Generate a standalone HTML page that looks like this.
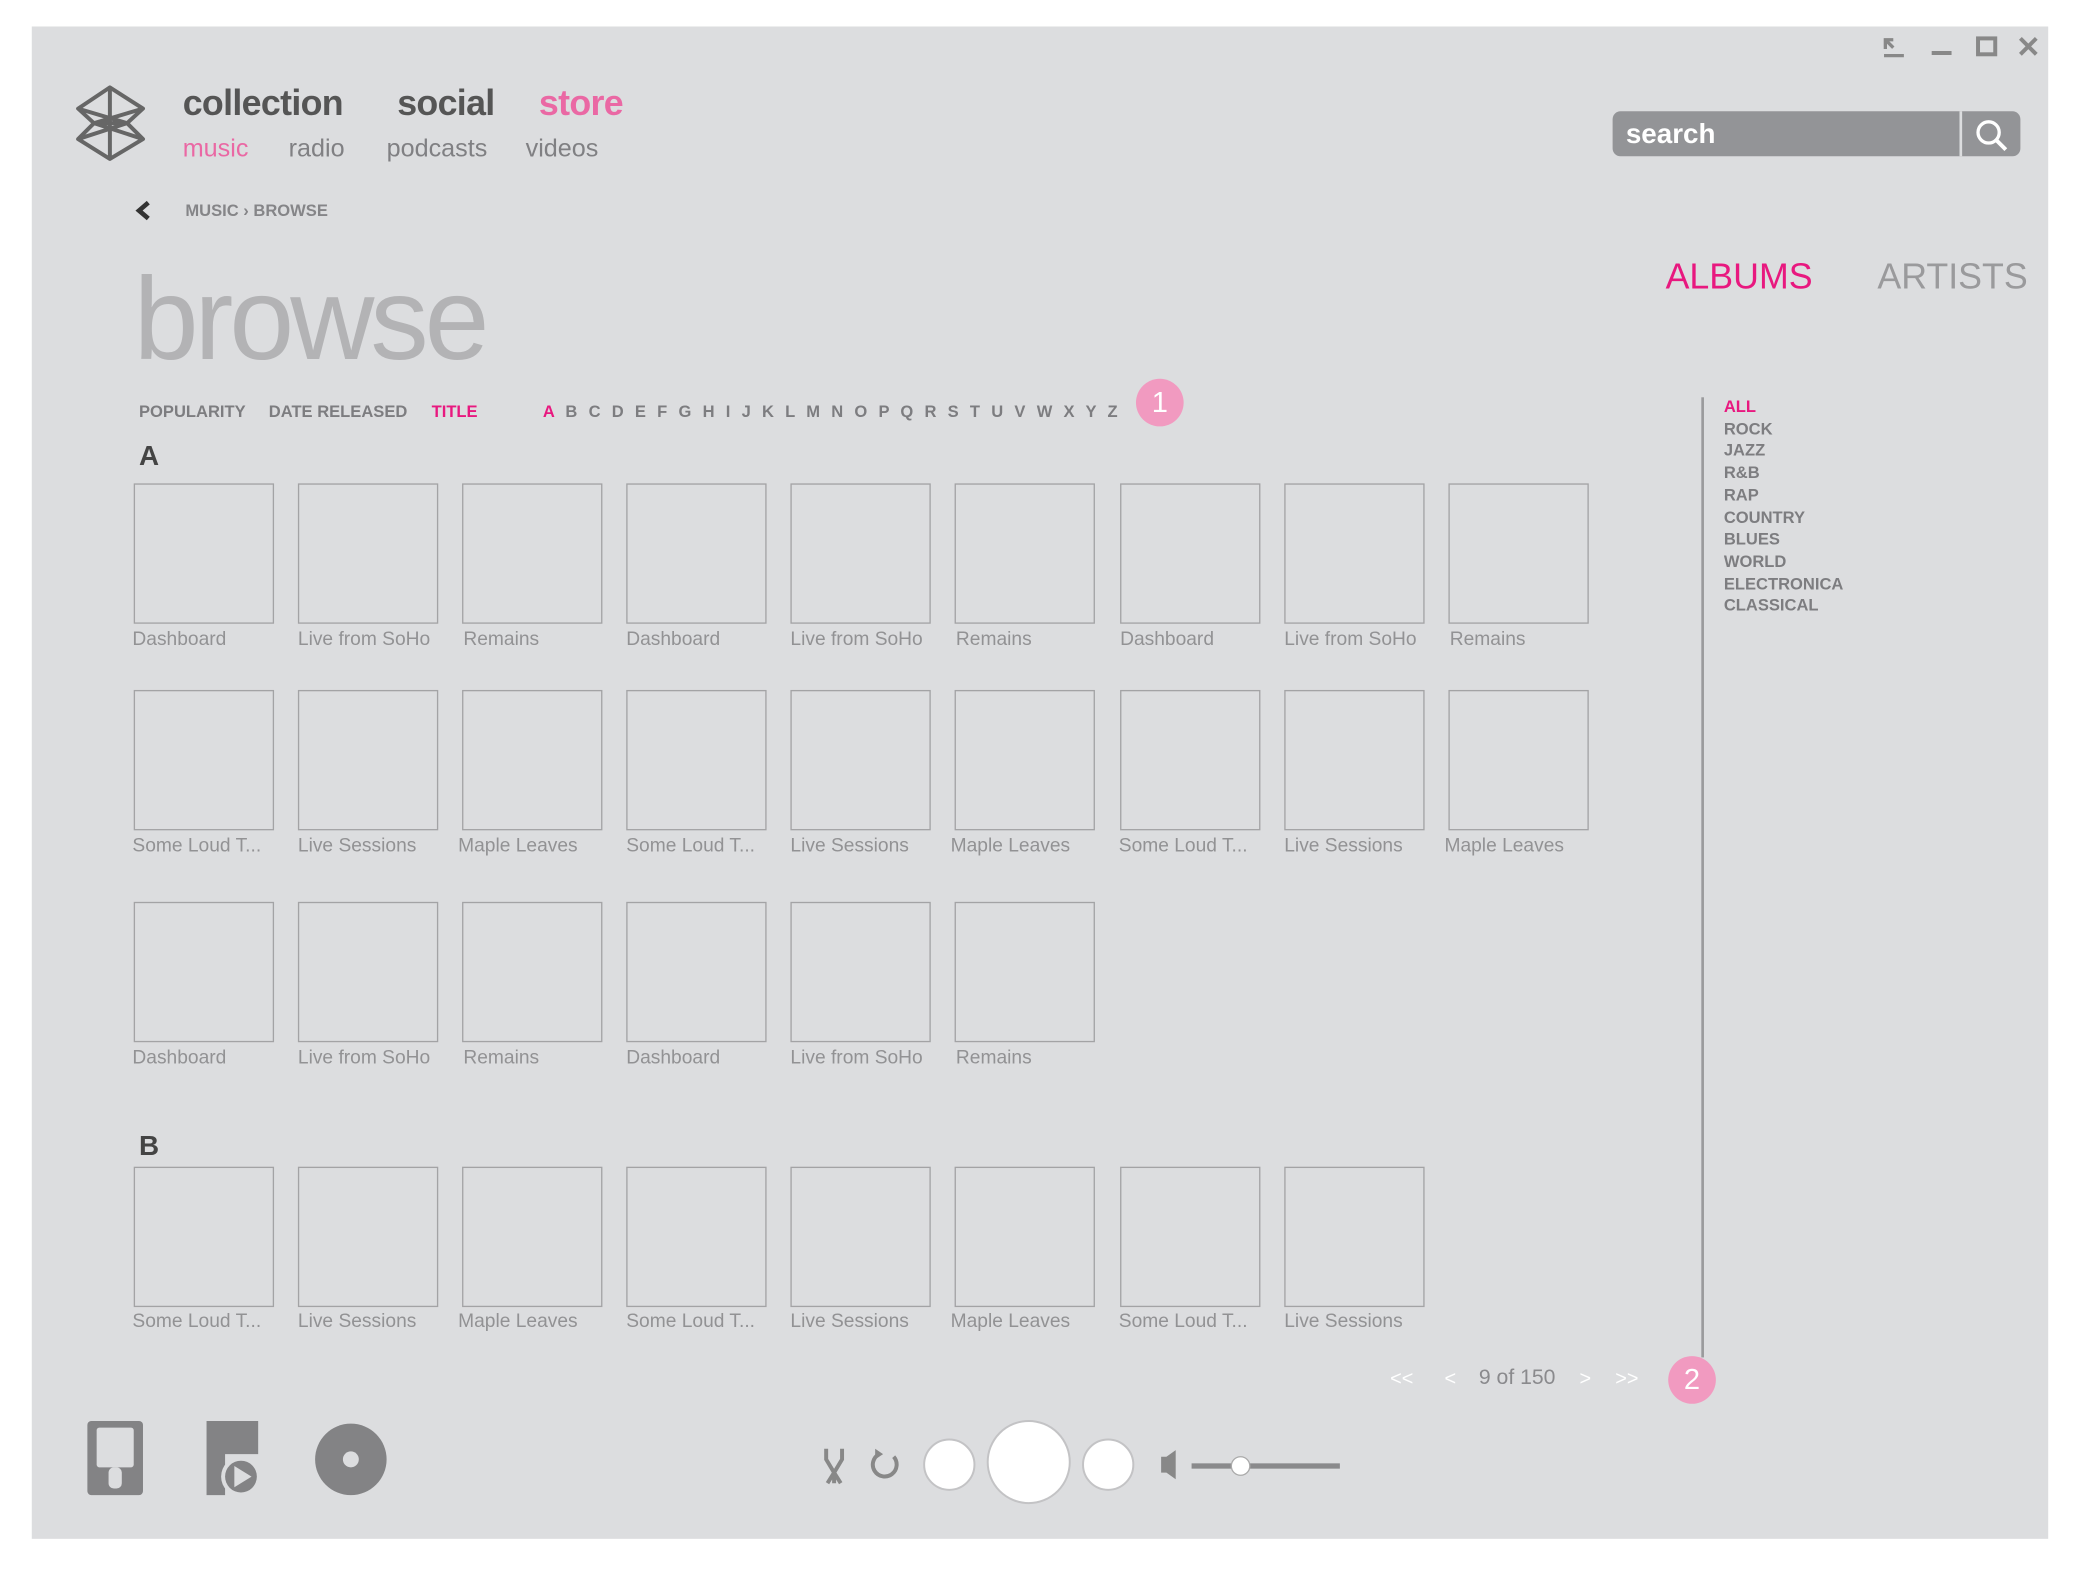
<!DOCTYPE html>
<html><head><meta charset="utf-8"><style>
html,body{margin:0;padding:0;background:#fff;width:2076px;height:1572px;overflow:hidden}
#s{position:absolute;left:0;top:0;width:1568px;height:1187px;transform:scale(1.32398,1.3243);transform-origin:0 0;font-family:"Liberation Sans",sans-serif}
.a{position:absolute;white-space:nowrap}
#panel{left:24px;top:20px;width:1523px;height:1142px;background:#dcdddf}
.t{position:absolute;width:104px;height:104px;border:1px solid #a3a3a5}
.l{position:absolute;font-size:14.5px;color:#929294;white-space:nowrap}
.top{font-size:27px;font-weight:bold;color:#555;letter-spacing:-0.5px}
.sub{font-size:19px;color:#808083}
.srt{font-size:12.5px;font-weight:bold;color:#7d7d80}
.g{font-size:12.5px;font-weight:bold;color:#7d7d80;line-height:16.7px}
</style></head><body><div id="s">
<div class="a" id="panel"></div>

<svg class="a" style="left:56px;top:63px" width="56" height="60" viewBox="0 0 56 60" fill="none" stroke="#666" stroke-width="3" stroke-linejoin="round">
<path d="M27 3 L52 19 L40 30 L52 42 L27 57 L3 42 L15 30 L3 19 Z"/><path d="M27 3 L27 57 M15 30 L40 30 M3 19 L40 30 M52 19 L15 30 M3 42 L40 30 M52 42 L15 30"/></svg>

<div class="a top" style="left:138px;top:63px">collection</div>
<div class="a top" style="left:300px;top:63px">social</div>
<div class="a top" style="left:407px;top:63px;color:#ea68a4">store</div>
<div class="a sub" style="left:138px;top:102px;color:#ea68a4">music</div>
<div class="a sub" style="left:218px;top:102px">radio</div>
<div class="a sub" style="left:292px;top:102px">podcasts</div>
<div class="a sub" style="left:397px;top:102px">videos</div>

<svg class="a" style="left:1420px;top:26px" width="125" height="20" stroke="#888" stroke-width="3" fill="none">
<path d="M3 16 H18 M4 4 L10 10 M4 11 V4 H10" stroke-width="2.5"/><path d="M39 14 H54"/><rect x="74" y="3" width="13" height="12"/><path d="M106 3 L118 15 M118 3 L106 15"/></svg>

<div class="a" style="left:1218px;top:84px;width:308px;height:34px;background:#939497;border-radius:6px"></div>
<div class="a" style="left:1480px;top:84px;width:2px;height:34px;background:#dcdddf"></div>
<div class="a" style="left:1228px;top:90px;font-size:21px;font-weight:bold;color:#fff">search</div>
<svg class="a" style="left:1490px;top:88px" width="28" height="28" fill="none" stroke="#fff" stroke-width="2.5"><circle cx="12" cy="12" r="8"/><path d="M18 18 L25 25" stroke-width="3"/></svg>

<svg class="a" style="left:101px;top:151px" width="14" height="16"><path d="M11 2 L4 8 L11 14" fill="none" stroke="#333" stroke-width="3.5"/></svg>
<div class="a" style="left:140px;top:152px;font-size:12.5px;font-weight:bold;color:#858588">MUSIC › BROWSE</div>

<div class="a" style="left:101px;top:190px;font-size:88px;color:#b3b3b5;letter-spacing:-3px">browse</div>

<div class="a" style="left:1258px;top:194px;font-size:27px;color:#e8187f">ALBUMS</div>
<div class="a" style="left:1418px;top:194px;font-size:27px;color:#9a9a9c">ARTISTS</div>

<div class="a srt" style="left:105px;top:304px">POPULARITY</div>
<div class="a srt" style="left:203px;top:304px">DATE RELEASED</div>
<div class="a srt" style="left:326px;top:304px;color:#e8187f">TITLE</div>
<div class="a srt" style="left:410px;top:304px;word-spacing:5px"><span style="color:#e8187f">A</span> B C D E F G H I J K L M N O P Q R S T U V W X Y Z</div>
<div class="a" style="left:858px;top:286px;width:36px;height:36px;border-radius:50%;background:#f19ac0;color:#fff;font-size:22px;text-align:center;line-height:36px">1</div>

<div class="a" style="left:105px;top:333px;font-size:21px;font-weight:bold;color:#444">A</div>
<div class="a" style="left:105px;top:854px;font-size:21px;font-weight:bold;color:#444">B</div>

<div class="t" style="left:101px;top:365px"></div><div class="t" style="left:225px;top:365px"></div><div class="t" style="left:349px;top:365px"></div><div class="t" style="left:473px;top:365px"></div><div class="t" style="left:597px;top:365px"></div><div class="t" style="left:721px;top:365px"></div><div class="t" style="left:846px;top:365px"></div><div class="t" style="left:970px;top:365px"></div><div class="t" style="left:1094px;top:365px"></div>
<div class="l" style="left:100px;top:475px">Dashboard</div><div class="l" style="left:225px;top:475px">Live from SoHo</div><div class="l" style="left:350px;top:475px">Remains</div><div class="l" style="left:473px;top:475px">Dashboard</div><div class="l" style="left:597px;top:475px">Live from SoHo</div><div class="l" style="left:722px;top:475px">Remains</div><div class="l" style="left:846px;top:475px">Dashboard</div><div class="l" style="left:970px;top:475px">Live from SoHo</div><div class="l" style="left:1095px;top:475px">Remains</div>
<div class="t" style="left:101px;top:521px"></div><div class="t" style="left:225px;top:521px"></div><div class="t" style="left:349px;top:521px"></div><div class="t" style="left:473px;top:521px"></div><div class="t" style="left:597px;top:521px"></div><div class="t" style="left:721px;top:521px"></div><div class="t" style="left:846px;top:521px"></div><div class="t" style="left:970px;top:521px"></div><div class="t" style="left:1094px;top:521px"></div>
<div class="l" style="left:100px;top:631px">Some Loud T...</div><div class="l" style="left:225px;top:631px">Live Sessions</div><div class="l" style="left:346px;top:631px">Maple Leaves</div><div class="l" style="left:473px;top:631px">Some Loud T...</div><div class="l" style="left:597px;top:631px">Live Sessions</div><div class="l" style="left:718px;top:631px">Maple Leaves</div><div class="l" style="left:845px;top:631px">Some Loud T...</div><div class="l" style="left:970px;top:631px">Live Sessions</div><div class="l" style="left:1091px;top:631px">Maple Leaves</div>
<div class="t" style="left:101px;top:681px"></div><div class="t" style="left:225px;top:681px"></div><div class="t" style="left:349px;top:681px"></div><div class="t" style="left:473px;top:681px"></div><div class="t" style="left:597px;top:681px"></div><div class="t" style="left:721px;top:681px"></div>
<div class="l" style="left:100px;top:791px">Dashboard</div><div class="l" style="left:225px;top:791px">Live from SoHo</div><div class="l" style="left:350px;top:791px">Remains</div><div class="l" style="left:473px;top:791px">Dashboard</div><div class="l" style="left:597px;top:791px">Live from SoHo</div><div class="l" style="left:722px;top:791px">Remains</div>
<div class="t" style="left:101px;top:881px"></div><div class="t" style="left:225px;top:881px"></div><div class="t" style="left:349px;top:881px"></div><div class="t" style="left:473px;top:881px"></div><div class="t" style="left:597px;top:881px"></div><div class="t" style="left:721px;top:881px"></div><div class="t" style="left:846px;top:881px"></div><div class="t" style="left:970px;top:881px"></div>
<div class="l" style="left:100px;top:990px">Some Loud T...</div><div class="l" style="left:225px;top:990px">Live Sessions</div><div class="l" style="left:346px;top:990px">Maple Leaves</div><div class="l" style="left:473px;top:990px">Some Loud T...</div><div class="l" style="left:597px;top:990px">Live Sessions</div><div class="l" style="left:718px;top:990px">Maple Leaves</div><div class="l" style="left:845px;top:990px">Some Loud T...</div><div class="l" style="left:970px;top:990px">Live Sessions</div>

<div class="a" style="left:1285px;top:300px;width:2px;height:725px;background:#9a9a9c"></div>
<div class="a g" style="left:1302px;top:299px"><span style="color:#e8187f">ALL</span><br>ROCK<br>JAZZ<br>R&amp;B<br>RAP<br>COUNTRY<br>BLUES<br>WORLD<br>ELECTRONICA<br>CLASSICAL</div>

<div class="a" style="left:1050px;top:1033px;font-size:15px;color:#fff">&lt;&lt;</div>
<div class="a" style="left:1091px;top:1033px;font-size:15px;color:#fff">&lt;</div>
<div class="a" style="left:1117px;top:1032px;font-size:16px;color:#8a8a8d">9 of 150</div>
<div class="a" style="left:1193px;top:1033px;font-size:15px;color:#fff">&gt;</div>
<div class="a" style="left:1220px;top:1033px;font-size:15px;color:#fff">&gt;&gt;</div>
<div class="a" style="left:1260px;top:1024px;width:36px;height:36px;border-radius:50%;background:#f19ac0;color:#fff;font-size:22px;text-align:center;line-height:36px">2</div>

<svg class="a" style="left:60px;top:1068px" width="240" height="68">
<rect x="6" y="5" width="42" height="56" rx="3" fill="#838385"/><rect x="13" y="10" width="28" height="30" rx="2" fill="#dcdddf"/><rect x="22" y="40" width="10" height="16" rx="4" fill="#dcdddf"/>
<path d="M96 5 H135 V30 H110 V61 H96 Z" fill="#838385"/><circle cx="122" cy="47" r="15" fill="#dcdddf"/><circle cx="122" cy="47" r="12" fill="#838385"/><path d="M117 39 L130 47 L117 55 Z" fill="#dcdddf"/>
<circle cx="205" cy="34" r="27" fill="#838385"/><circle cx="205" cy="34" r="6" fill="#dcdddf"/></svg>

<svg class="a" style="left:615px;top:1068px" width="410" height="72">
<path d="M9 26 L9 34 L15 44 L21 34 L21 26 M15 44 V52 M10 52 L15 44 L20 52" fill="none" stroke="#888" stroke-width="3"/>
<path d="M60 32 A9 9 0 1 1 49 30" fill="none" stroke="#888" stroke-width="3"/><path d="M46 26 L52 30 L46 34Z" fill="#888"/>
<circle cx="102" cy="38" r="19" fill="#fff" stroke="#c3c3c5" stroke-width="1.5"/>
<circle cx="162" cy="36" r="31" fill="#fff" stroke="#c3c3c5" stroke-width="1.5"/>
<circle cx="222" cy="38" r="19" fill="#fff" stroke="#c3c3c5" stroke-width="1.5"/>
<path d="M262 32 H266 L273 27 V49 L266 44 H262 Z" fill="#888"/>
<rect x="285" y="37" width="112" height="4" fill="#8a8a8c"/><circle cx="322" cy="39" r="7" fill="#fff" stroke="#aaa"/></svg>
</div></body></html>
